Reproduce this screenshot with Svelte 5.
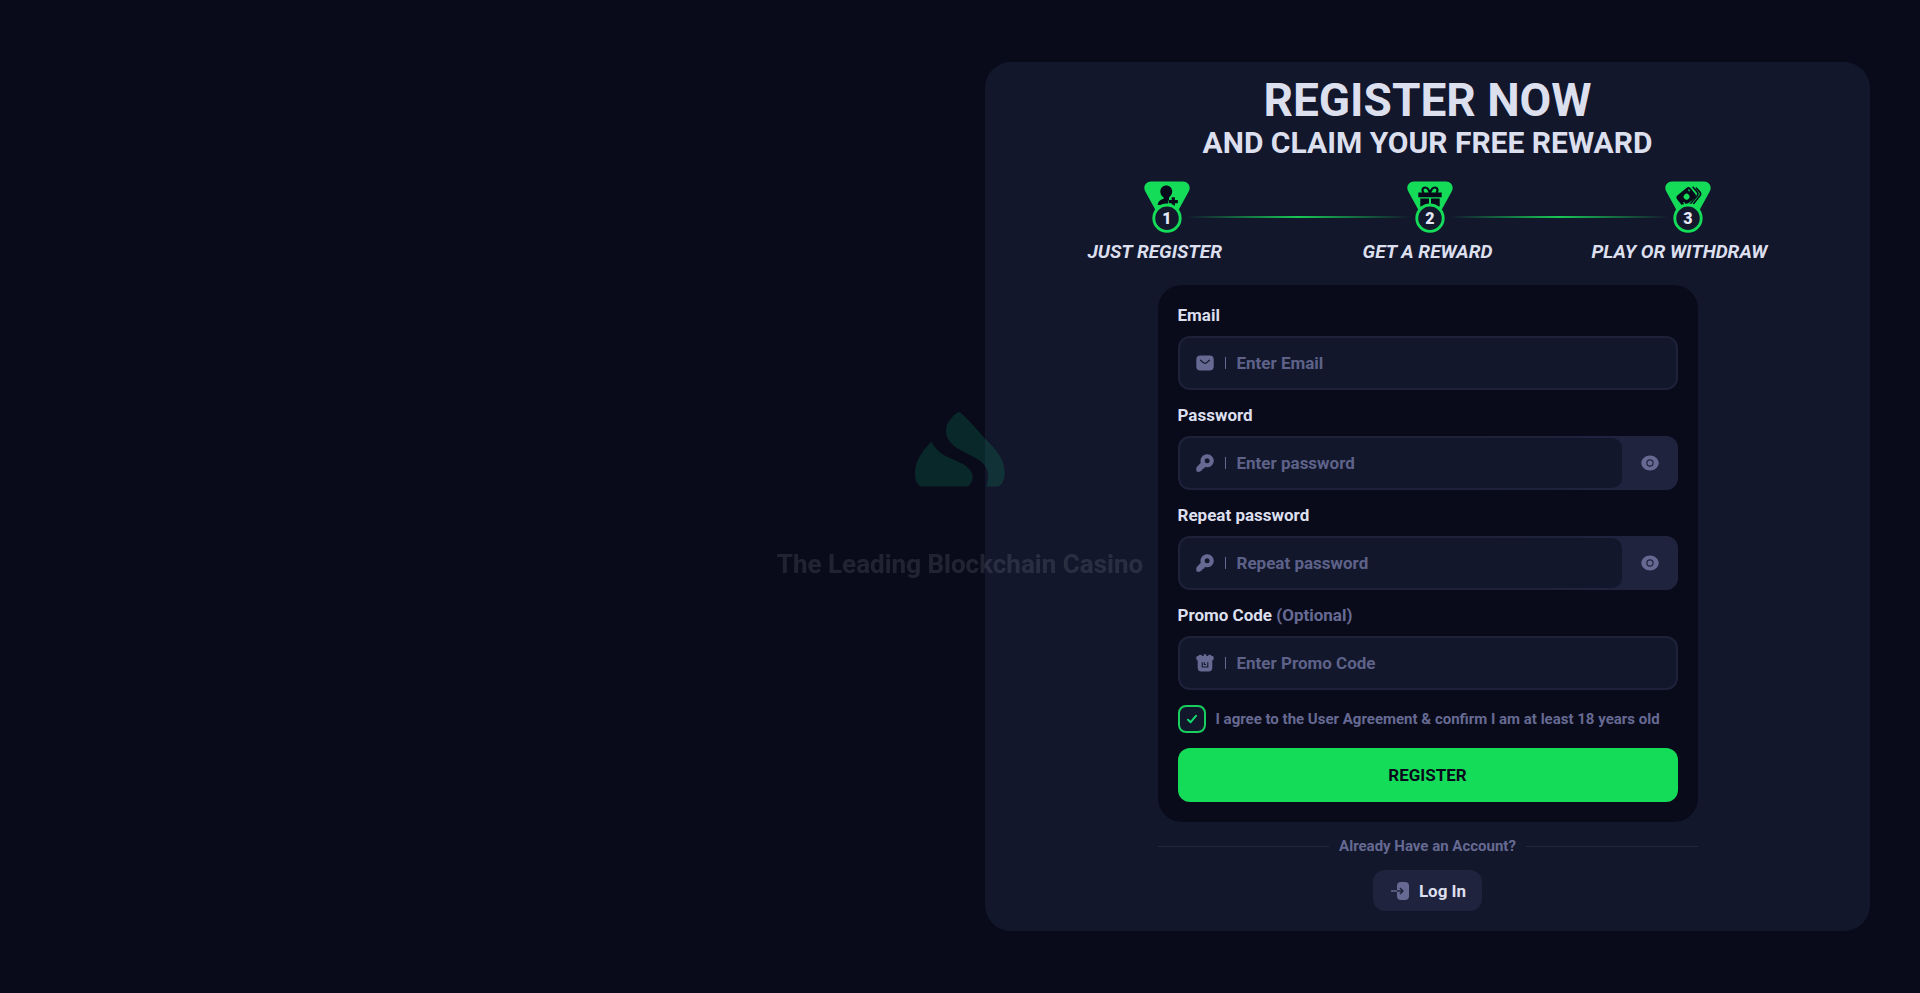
<script>
  let email = $state('');
  let password = $state('');
  let repeat = $state('');
  let promo = $state('');
  let agreed = $state(true);
  let visible = $state({ password: false, repeat: false });

  const steps = ['Just register', 'Get a reward', 'Play or withdraw'];
</script>

{#snippet keyIcon()}
  <svg class="icon" viewBox="0 0 18 18" aria-hidden="true">
    <path fill="currentColor" fill-rule="evenodd" d="M11.200.3a6.500 6.500 0 1 1-1.500 12.800l-1.200.3-.6 1.400-1.600.2-.2 1.500-1.300.2-.8 1H1.800A1.500 1.500 0 0 1 .3 16.200v-2c0-.5.2-.9.5-1.200l4-4.200A6.500 6.500 0 0 1 11.200.3ZM11.200 4.300a2.500 2.500 0 1 0 0 5 2.500 2.500 0 0 0 0-5Z" />
  </svg>
{/snippet}

{#snippet eyeButton(name, label)}
  <button
    class="reveal"
    type="button"
    aria-label={label}
    aria-pressed={visible[name]}
    onclick={() => (visible[name] = !visible[name])}
  >
    <svg class="icon" viewBox="0 0 18 18" aria-hidden="true">
      <path fill="currentColor" d="M9 1.500C13.500 1.500 17.700 5 17.700 9S13.500 16.500 9 16.500.3 13 .3 9 4.500 1.500 9 1.500Z" />
      <circle cx="9" cy="9" r="3.100" fill="none" stroke="#20233d" stroke-width="1.200" />
    </svg>
  </button>
{/snippet}

<div class="page">
  <main class="panel">
    <h1>REGISTER NOW</h1>
    <h2>AND CLAIM YOUR FREE REWARD</h2>

    <div class="medals" aria-hidden="true">
      {#each steps as _, i}
        {#if i > 0}<span class="link"></span>{/if}
        <svg class="medal" viewBox="0 0 46 52">
          <path fill="#14dc58" d="M7 .5H39C44.500.5 47.300 6 44.700 10.500L34 30H12L1.300 10.500C-1.300 6 1.500.5 7 .5Z" />
          {#if i === 0}
            <g fill="#080a1b">
              <path d="M22.300 4.500c3.400 0 5.900 2.600 5.900 6 0 2.500-1.500 4.600-3.200 5.900v2.200c-1 1.500-1.200 3.400-.4 5.400H13.700c0-3.200 1.900-5 5.900-6.300v-1.300c-1.900-1.300-3.300-3.400-3.300-5.900 0-3.400 2.600-6 6-6Z" />
              <path d="M27.700 16.300h3.200v2.800h3v3.200h-3V25h-3.200v-2.700h-2.900v-3.200h2.900Z" />
            </g>
          {:else if i === 1}
            <path fill="#080a1b" d="M11.300 11.500h23.400v4.700H11.300ZM13.300 17.500h8.700v8h-8.700ZM24 17.500h8.700v8H24Z" />
            <path fill="none" stroke="#080a1b" stroke-width="2.200" d="M23 12c-1.200-3.500-2.700-5.500-4.700-5.500-1.700 0-2.800 1.200-2.800 2.800 0 1 .4 1.900 1.200 2.700M23 12c1.200-3.500 2.700-5.500 4.700-5.500 1.700 0 2.800 1.200 2.800 2.800 0 1-.4 1.900-1.200 2.700" />
          {:else}
            <g transform="rotate(-40 21 15.500)">
              <rect x="12.300" y="9.200" width="17.500" height="13" rx="3" fill="#080a1b" />
              <circle cx="21.300" cy="16" r="2.900" fill="#14dc58" />
              <path fill="none" stroke="#14dc58" stroke-width="1.200" stroke-linecap="round" d="M15.400 18.800v1M27.200 12.200v1" />
            </g>
            <path fill="none" stroke="#080a1b" stroke-width="1.600" stroke-linecap="round" d="M28 6.300 32.200 11c1 1.200.9 2.500 0 3.700l-7.200 8.600M31.300 7l3.600 4.100c1 1.200.9 2.500 0 3.700l-6.200 7.600" />
          {/if}
          <circle cx="23" cy="37.200" r="13.200" fill="#13182d" stroke="#14dc58" stroke-width="2.900" />
          <text x="23" y="42.700" text-anchor="middle">{i + 1}</text>
        </svg>
      {/each}
    </div>
    <ol class="captions">
      {#each steps as step}<li>{step}</li>{/each}
    </ol>

    <form onsubmit={(e) => e.preventDefault()}>
      <div class="field">
        <label for="email">Email</label>
        <div class="box">
          <div class="entry">
            <svg class="icon" viewBox="0 0 18 18" aria-hidden="true">
              <rect x=".3" y="1.500" width="17.400" height="15" rx="4" fill="currentColor" />
              <path d="m4.500 6.200 3 2.500c.9.7 2.100.7 3 0l3-2.500" fill="none" stroke="#13182d" stroke-width="1.200" stroke-linecap="round" />
            </svg>
            <input id="email" type="email" placeholder="Enter Email" bind:value={email} />
          </div>
        </div>
      </div>

      <div class="field">
        <label for="password">Password</label>
        <div class="box">
          <div class="entry">
            {@render keyIcon()}
            <input id="password" type={visible.password ? 'text' : 'password'} placeholder="Enter password" bind:value={password} />
          </div>
          {@render eyeButton('password', 'Show password')}
        </div>
      </div>

      <div class="field">
        <label for="repeat">Repeat password</label>
        <div class="box">
          <div class="entry">
            {@render keyIcon()}
            <input id="repeat" type={visible.repeat ? 'text' : 'password'} placeholder="Repeat password" bind:value={repeat} />
          </div>
          {@render eyeButton('repeat', 'Show repeated password')}
        </div>
      </div>

      <div class="field">
        <label for="promo">Promo Code <span class="muted">(Optional)</span></label>
        <div class="box">
          <div class="entry">
            <svg class="icon" viewBox="0 0 18 18" aria-hidden="true">
              <path fill="currentColor" d="M4 .8c1 0 1.800.5 2.200 1.300h1.400V.6c.9-.5 1.900-.5 2.800 0v1.500h1.400C12.200 1.300 13 .8 14 .8s1.500.6 1.500 1.300h.7c.9 0 1.500.7 1.500 1.500v1.200c0 .9-.6 1.500-1.500 1.500H1.800C.9 6.300.3 5.700.3 4.800V3.600c0-.8.6-1.500 1.500-1.500h.7C2.500 1.400 3 .8 4 .8ZM1.700 6.300h14.600v7.400c0 2.200-1.300 3.700-3.500 3.700H5.200c-2.200 0-3.500-1.500-3.500-3.700Z" />
              <path fill="none" stroke="#13182d" stroke-width="1.100" d="M6.200 8.300v4.700h5.600V8.300M8.300 8.300v2.200h1.600" />
            </svg>
            <input id="promo" type="text" placeholder="Enter Promo Code" bind:value={promo} />
          </div>
        </div>
      </div>

      <label class="agree">
        <span class="tick">
          <input type="checkbox" bind:checked={agreed} />
          {#if agreed}
            <svg viewBox="0 0 12 12" aria-hidden="true">
              <path d="M2 6.800 4.600 9.200 10 2.800" fill="none" stroke="#14dc70" stroke-width="2" stroke-linecap="round" stroke-linejoin="round" />
            </svg>
          {/if}
        </span>
        <span>I agree to the User Agreement &amp; confirm I am at least 18 years old</span>
      </label>

      <button class="submit" type="submit">REGISTER</button>
    </form>

    <div class="already">Already Have an Account?</div>

    <button class="login" type="button">
      <svg class="icon" viewBox="0 0 18 18" aria-hidden="true">
        <rect x="6" width="12" height="18" rx="4" fill="currentColor" />
        <path d="M0 9h6" stroke="currentColor" stroke-width="1.500" />
        <path d="M6 9h5.500M9 6l3 3-3 3" fill="none" stroke="#20233d" stroke-width="1.500" stroke-linejoin="round" />
      </svg>
      Log In
    </button>
  </main>

  <div class="splash" aria-hidden="true">
    <svg viewBox="0 0 270 224">
      <path d="M49 88C30 110 0 140 0 182c0 23 7 41 22 41h136c10-5 15-18 15-33-5-22-28-35-58-48C85 130 65 118 49 88Z" />
      <path d="M124 3c5-4 10-4 15 0 25 23 48 50 73 79 32 30 57 60 57 100 0 21-7 35-19 41h-36c4-12 6-24 6-36-3-25-18-40-48-55-38-18-79-38-79-76 0-22 12-36 31-53Z" />
    </svg>
    <p>The Leading Blockchain Casino</p>
  </div>
</div>

<style>
  :global(body) {
    margin: 0;
    background: #090b1b;
  }
  .page {
    --panel: #12172c;
    --deep: #090b1b;
    --raised: #20233d;
    --edge: #1e2139;
    --muted: #666a92;
    --light: #dcdfed;
    --green: #14dc58;
    box-sizing: border-box;
    min-height: 100vh;
    padding: 24px 50px;
    display: grid;
    grid-template-columns: 187fr 177fr;
    align-items: center;
    font-family: Roboto, sans-serif;
    font-weight: 700;
    font-size: 17px;
    color: var(--light);
  }
  .page :is(button, input) {
    font: inherit;
  }
  .panel {
    grid-column: 2;
    display: flex;
    flex-direction: column;
    align-items: center;
    padding: 15px 20px 20px;
    border-radius: 26px;
    background: var(--panel);
  }
  h1,
  h2,
  p,
  ol {
    margin: 0;
    padding: 0;
  }
  h1 {
    font-size: 46px;
    line-height: 46px;
  }
  h2 {
    margin-top: 4px;
    font-size: 30px;
    line-height: 32px;
  }
  .medals {
    display: grid;
    grid-template-columns: 46px 217fr 46px 212fr 46px;
    width: 100%;
    max-width: 567px;
    margin: 22px 0 8px;
  }
  .medal {
    display: block;
    width: 46px;
    height: 52px;
  }
  .medal text {
    fill: #e4e7f5;
    font-size: 16px;
    font-weight: 900;
  }
  .link {
    height: 2px;
    margin: 35px -4px 0;
    background: linear-gradient(90deg, transparent, #18c856, transparent);
  }
  .captions {
    display: grid;
    grid-template-columns: 1fr auto 1fr;
    width: 100%;
    max-width: 680px;
    margin-bottom: 22px;
    list-style: none;
    font-size: 19px;
    line-height: 22px;
    font-style: italic;
    text-transform: uppercase;
    white-space: nowrap;
  }
  .captions li:last-child {
    text-align: right;
  }
  form {
    box-sizing: border-box;
    width: 100%;
    max-width: 540px;
    display: flex;
    flex-direction: column;
    gap: 15px;
    padding: 20px;
    border-radius: 24px;
    background: var(--deep);
  }
  .field {
    display: flex;
    flex-direction: column;
    gap: 10px;
    line-height: 21px;
  }
  .muted {
    color: var(--muted);
  }
  .box {
    display: flex;
    box-sizing: border-box;
    height: 54px;
    padding: 2px;
    border-radius: 12px;
    background: var(--edge);
  }
  .box:has(.reveal) {
    background: linear-gradient(90deg, var(--edge) 60%, var(--raised) 85%);
  }
  .entry {
    flex: 1;
    display: flex;
    align-items: center;
    gap: 11px;
    min-width: 0;
    padding-left: 16px;
    border-radius: 10px;
    background: var(--panel);
    color: var(--muted);
  }
  .icon {
    display: block;
    flex: none;
    width: 18px;
    height: 18px;
    color: var(--muted);
  }
  .entry::before {
    content: '';
    order: 1;
    width: 1px;
    height: 12px;
    background: var(--muted);
  }
  .entry input {
    order: 2;
    flex: 1;
    min-width: 0;
    padding: 0;
    border: 0;
    outline: 0;
    background: none;
    color: var(--light);
  }
  .entry input::placeholder {
    color: #5e6289;
    opacity: 1;
  }
  .reveal {
    display: grid;
    place-items: center;
    box-sizing: border-box;
    width: 54px;
    padding: 0 0 0 2px;
    border: 0;
    background: none;
    cursor: pointer;
  }
  .agree {
    display: flex;
    align-items: center;
    gap: 10px;
    color: var(--muted);
    font-size: 15px;
    line-height: 20px;
    cursor: pointer;
  }
  .tick {
    flex: none;
    display: grid;
    place-items: center;
  }
  .tick > :global(*) {
    grid-area: 1 / 1;
  }
  .tick input {
    appearance: none;
    box-sizing: border-box;
    width: 28px;
    height: 28px;
    margin: 0;
    border: 2px solid #18cf60;
    border-radius: 8px;
    background: var(--panel);
  }
  .tick svg {
    width: 12px;
    height: 12px;
    pointer-events: none;
  }
  .submit {
    height: 54px;
    border: 0;
    border-radius: 12px;
    background: var(--green);
    color: var(--deep);
    cursor: pointer;
  }
  .already {
    display: flex;
    align-items: center;
    gap: 10px;
    width: 100%;
    max-width: 540px;
    margin: 14px 0;
    color: var(--muted);
    font-size: 15px;
    line-height: 20px;
  }
  .already::before,
  .already::after {
    content: '';
    flex: 1;
    height: 1px;
    background: #23263f;
  }
  .login {
    display: flex;
    align-items: center;
    gap: 10px;
    height: 41px;
    padding: 0 16px 0 18px;
    border: 0;
    border-radius: 12px;
    background: var(--raised);
    color: var(--light);
    cursor: pointer;
  }
  .splash {
    position: fixed;
    inset: 0;
    display: flex;
    flex-direction: column;
    align-items: center;
    justify-content: center;
    gap: 60px;
    pointer-events: none;
  }
  .splash svg {
    width: 90px;
    height: 75px;
    fill: #14dc80;
    opacity: 0.14;
  }
  .splash p {
    color: #fff;
    font-size: 26px;
    line-height: 34px;
    opacity: 0.1;
  }
</style>
